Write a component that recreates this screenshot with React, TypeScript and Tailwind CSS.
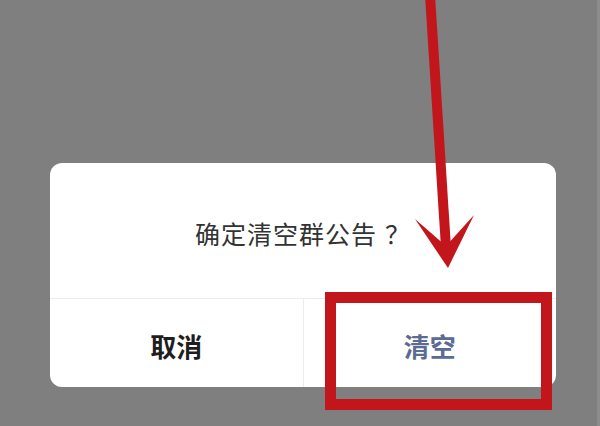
import React from "react";

export default function App() {
  const font = { fontFamily: '"Noto Sans CJK SC", "Noto Sans", sans-serif' };
  return (
    <div
      lang="zh-CN"
      className="relative w-[600px] h-[426px] overflow-hidden bg-[#7f7f7f] border-r-[3px] border-[#8c8c8c]"
      style={font}
    >
      <div className="ml-[50px] mt-[163px] w-[506px] h-[224px] rounded-[12px] bg-white flex flex-col overflow-hidden">
        <div className="h-[135px] flex items-center justify-center pt-[5px]">
          <span className="text-[25px] leading-none tracking-[1px] text-[#333333]">
            确定清空群公告
            <span className="ml-[8px]">？</span>
          </span>
        </div>
        <div className="flex-1 flex border-t border-[#ececec]">
          <div className="flex-1 flex items-center justify-center pt-[6px] border-r border-[#ececec]">
            <span className="text-[26px] leading-none font-bold text-[#1e1e1e]">取消</span>
          </div>
          <div className="flex-1 flex items-center justify-center pt-[6px]">
            <span className="text-[26px] leading-none font-semibold text-[#5b6b93]">清空</span>
          </div>
        </div>
      </div>

      {/* annotation box */}
      <div className="absolute left-[325px] top-[292px] w-[227px] h-[118px] border-[11px] border-[#c3161c]" />

      {/* annotation arrow */}
      <svg className="absolute left-0 top-0" width="600" height="426" viewBox="0 0 600 426">
        <line x1="430" y1="-5" x2="446" y2="248" stroke="#c3161c" strokeWidth="10" />
        <polygon points="448,268 415,219 446,246 474,215" fill="#c3161c" />
      </svg>
    </div>
  );
}
